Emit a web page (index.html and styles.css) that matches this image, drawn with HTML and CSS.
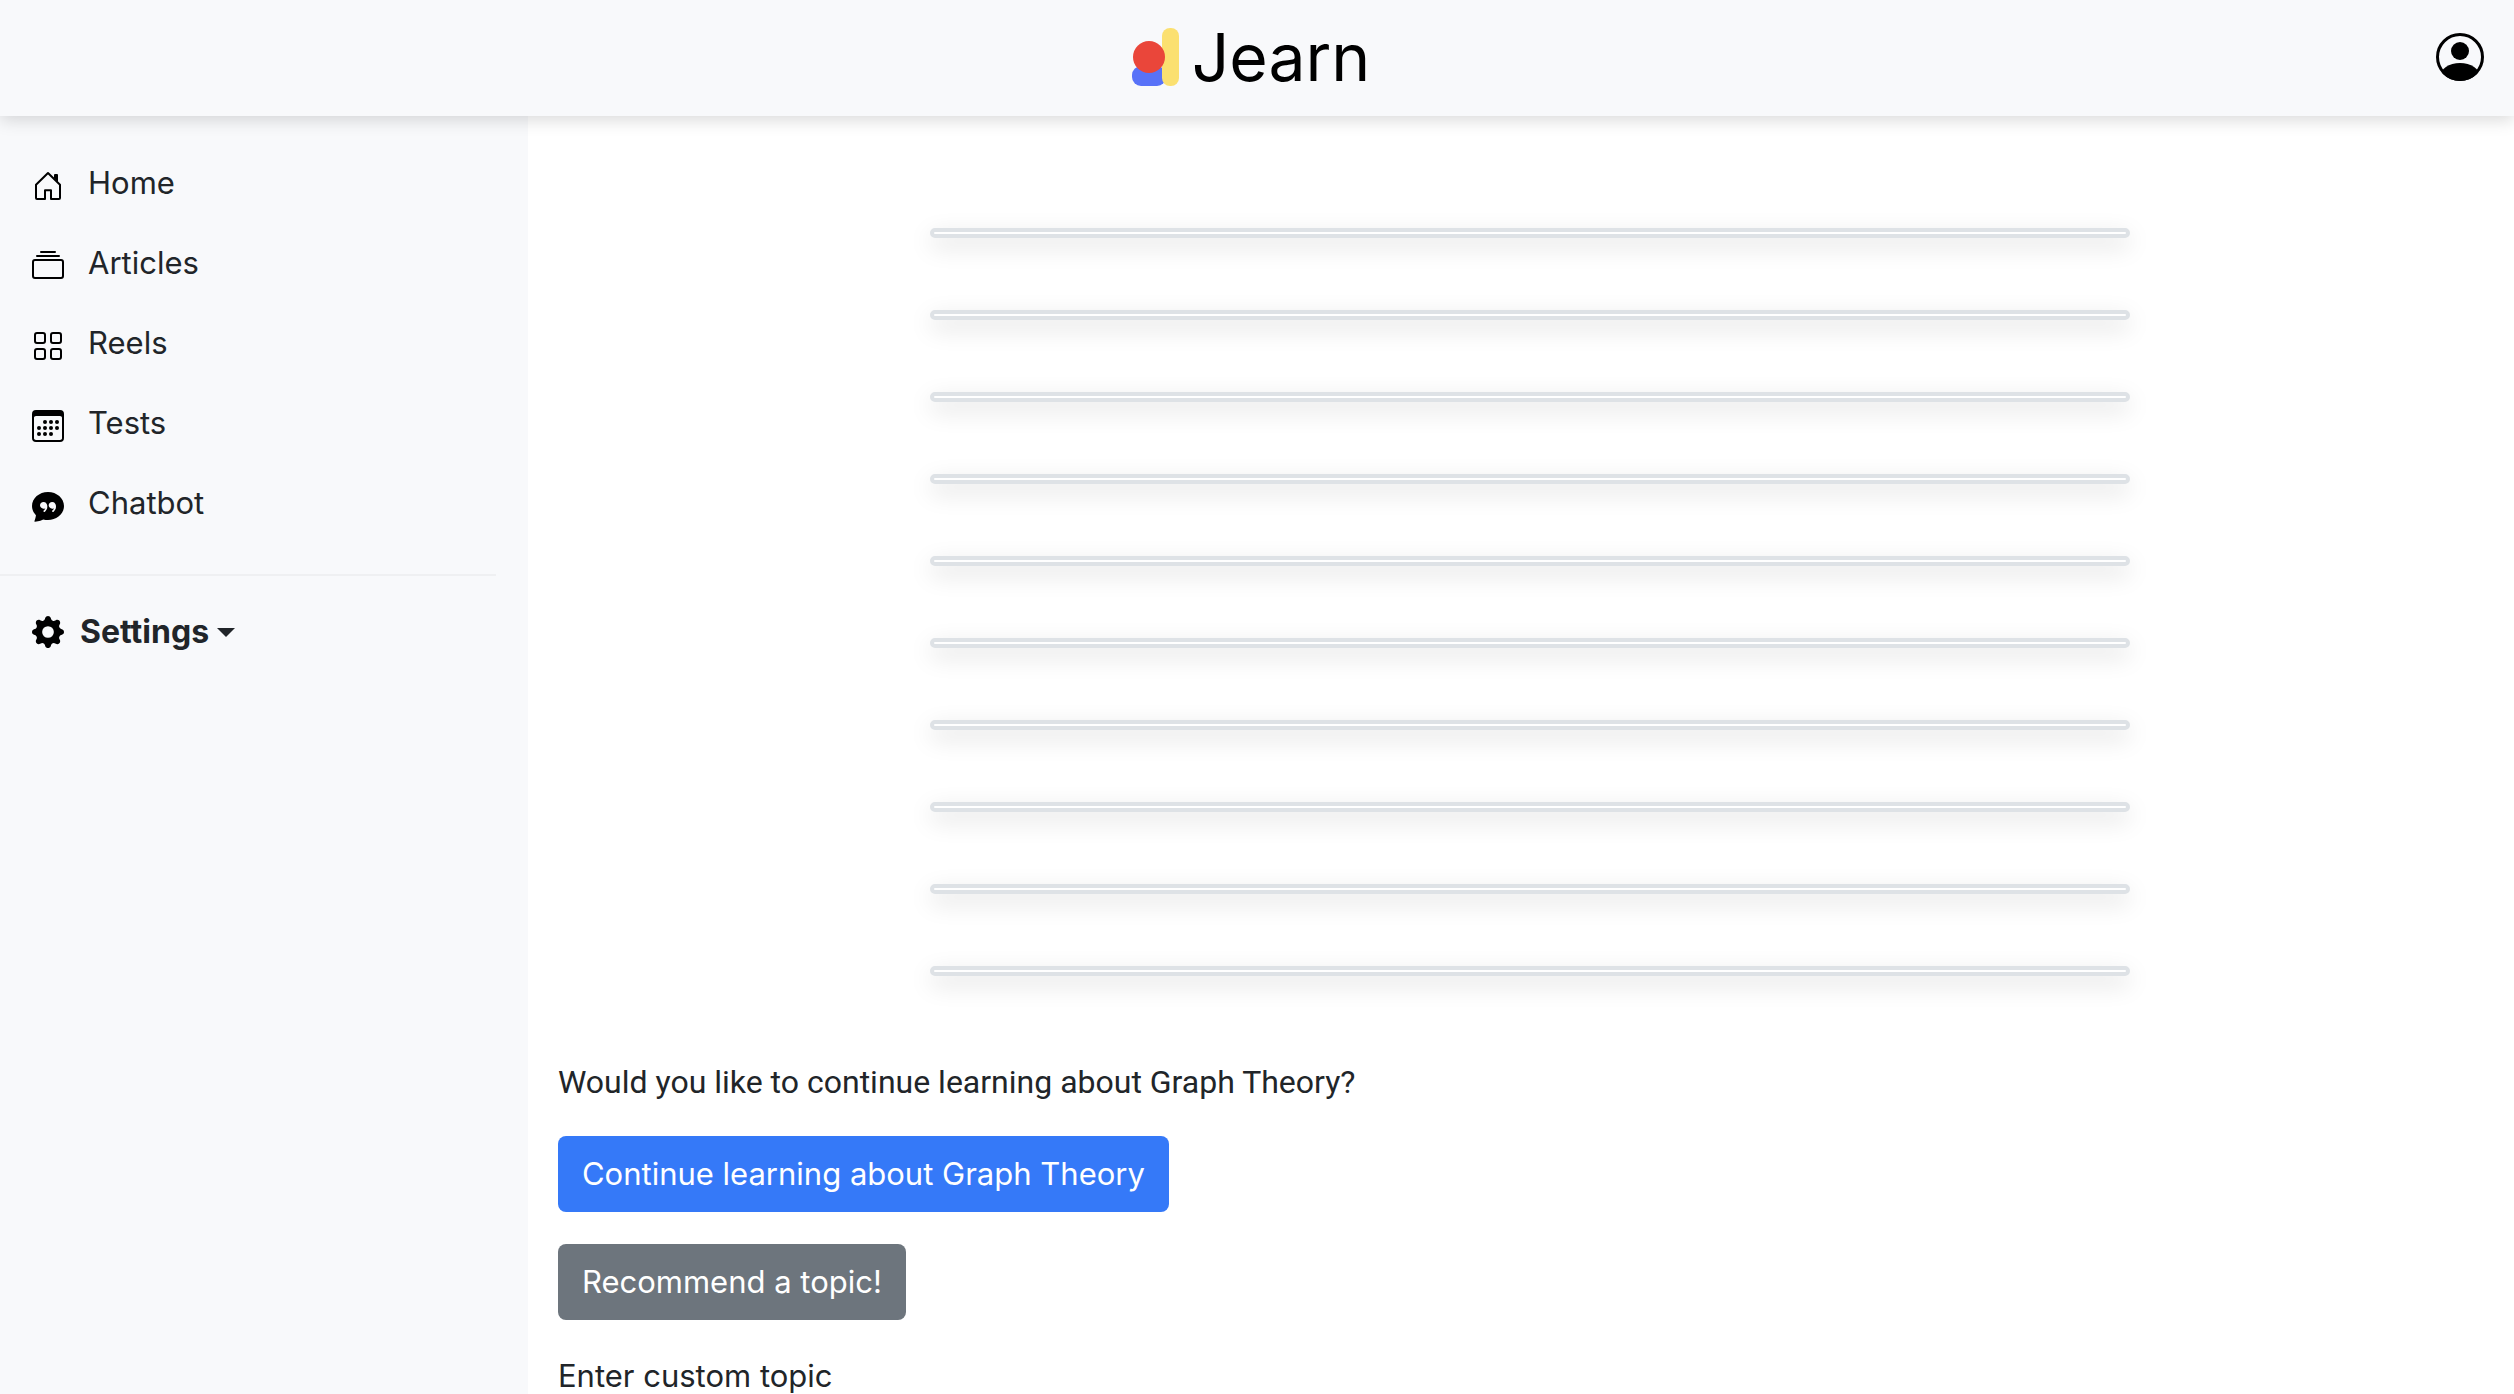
FILE: index.html
```html
<!DOCTYPE html>
<html lang="en">
<head>
<meta charset="utf-8">
<title>Jearn</title>
<link rel="stylesheet" href="styles.css">
</head>
<body>
<header class="topbar">
  <a class="brand" href="#">
    <svg class="brand-mark" viewBox="0 0 48 58" aria-hidden="true">
      <rect x="0" y="38" width="34" height="20" rx="9" fill="#5872f8"/>
      <rect x="30" y="0" width="17" height="58" rx="8" fill="#fbe070"/>
      <circle cx="17" cy="29" r="16" fill="#ea463a"/>
    </svg>
    <span class="brand-name">Jearn</span>
  </a>
  <button class="profile" type="button" aria-label="Profile">
    <svg viewBox="0 0 48 48" width="48" height="48">
      <clipPath id="face"><circle cx="24" cy="24" r="24"/></clipPath>
      <circle cx="24" cy="24" r="22.5" fill="none" stroke="#000" stroke-width="3"/>
      <circle cx="24" cy="18" r="9"/>
      <ellipse cx="24" cy="44" rx="20" ry="14" clip-path="url(#face)"/>
    </svg>
  </button>
</header>
<div class="layout">
  <aside class="sidebar">
    <nav class="menu">
      <a class="menu-item" href="#"><svg class="icon" viewBox="0 0 16 16"><path d="M2 7.4 8 1.5l6 5.900V14a.5.5 0 0 1-.5.5h-4v-4.400h-3v4.400h-4A.5.5 0 0 1 2 14z" fill="none" stroke="#000" stroke-linejoin="round"/><path d="M11 2.500a.5.5 0 0 1 .5-.5h1a.5.5 0 0 1 .5.5V6l-2-2z"/></svg><span>Home</span></a>
      <a class="menu-item" href="#"><svg class="icon" viewBox="0 0 16 16"><path d="M2.500 3.500a.5.5 0 0 1 0-1h11a.5.5 0 0 1 0 1h-11zm2-2a.5.5 0 0 1 0-1h7a.5.5 0 0 1 0 1h-7zM0 13a1.500 1.500 0 0 0 1.500 1.500h13A1.500 1.500 0 0 0 16 13V6a1.500 1.500 0 0 0-1.500-1.500h-13A1.500 1.500 0 0 0 0 6v7zm1.500.5A.5.5 0 0 1 1 13V6a.5.5 0 0 1 .5-.5h13a.5.5 0 0 1 .5.5v7a.5.5 0 0 1-.5.5h-13z"/></svg><span>Articles</span></a>
      <a class="menu-item" href="#"><svg class="icon icon-outline" viewBox="0 0 16 16"><rect x="1.500" y="1.500" width="5" height="5" rx="1"/><rect x="9.500" y="1.500" width="5" height="5" rx="1"/><rect x="1.500" y="9.500" width="5" height="5" rx="1"/><rect x="9.500" y="9.500" width="5" height="5" rx="1"/></svg><span>Reels</span></a>
      <a class="menu-item" href="#"><svg class="icon" viewBox="0 0 16 16"><path d="M14 0H2a2 2 0 0 0-2 2v12a2 2 0 0 0 2 2h12a2 2 0 0 0 2-2V2a2 2 0 0 0-2-2zM1 3.857C1 3.384 1.448 3 2 3h12c.552 0 1 .384 1 .857v10.286c0 .473-.448.857-1 .857H2c-.552 0-1-.384-1-.857V3.857z"/><circle cx="6.500" cy="6" r="1"/><circle cx="9.500" cy="6" r="1"/><circle cx="12.500" cy="6" r="1"/><circle cx="3.500" cy="9" r="1"/><circle cx="6.500" cy="9" r="1"/><circle cx="9.500" cy="9" r="1"/><circle cx="12.500" cy="9" r="1"/><circle cx="3.500" cy="12" r="1"/><circle cx="6.500" cy="12" r="1"/><circle cx="9.500" cy="12" r="1"/></svg><span>Tests</span></a>
      <a class="menu-item" href="#"><svg class="icon" viewBox="0 0 16 16"><path d="M16 8c0 3.866-3.582 7-8 7a9.060 9.060 0 0 1-2.347-.306c-.584.296-1.925.864-4.181 1.234-.2.032-.352-.176-.273-.362.354-.836.674-1.950.77-2.966C.744 11.370 0 9.760 0 8c0-3.866 3.582-7 8-7s8 3.134 8 7zM7.194 6.766a1.688 1.688 0 0 0-.227-.272 1.467 1.467 0 0 0-.469-.324l-.008-.004A1.785 1.785 0 0 0 5.734 6C4.776 6 4 6.746 4 7.667c0 .92.776 1.666 1.734 1.666.343 0 .662-.095.931-.26-.137.389-.39.804-.81 1.220a.405.405 0 0 0 .011.59c.173.16.447.155.614-.01 1.334-1.329 1.370-2.758.941-3.706a2.461 2.461 0 0 0-.227-.4zM11 9.073c-.136.389-.39.804-.81 1.220a.405.405 0 0 0 .012.59c.172.16.446.155.613-.01 1.334-1.329 1.370-2.758.942-3.706a2.466 2.466 0 0 0-.228-.4 1.686 1.686 0 0 0-.227-.273 1.466 1.466 0 0 0-.469-.324l-.008-.004A1.785 1.785 0 0 0 10.070 6c-.957 0-1.734.746-1.734 1.667 0 .92.777 1.666 1.734 1.666.343 0 .662-.095.931-.26z"/></svg><span>Chatbot</span></a>
    </nav>
    <hr class="divider">
    <button class="settings" type="button">
      <svg class="icon" viewBox="0 0 16 16"><path d="M9.405 1.050c-.413-1.400-2.397-1.400-2.810 0l-.1.340a1.464 1.464 0 0 1-2.105.872l-.31-.17c-1.283-.698-2.686.705-1.987 1.987l.169.311c.446.82.023 1.841-.872 2.105l-.34.1c-1.400.413-1.400 2.397 0 2.810l.34.1a1.464 1.464 0 0 1 .872 2.105l-.17.31c-.698 1.283.705 2.686 1.987 1.987l.311-.169a1.464 1.464 0 0 1 2.105.872l.1.34c.413 1.400 2.397 1.400 2.810 0l.1-.34a1.464 1.464 0 0 1 2.105-.872l.31.17c1.283.698 2.686-.705 1.987-1.987l-.169-.311a1.464 1.464 0 0 1 .872-2.105l.34-.1c1.400-.413 1.400-2.397 0-2.810l-.34-.1a1.464 1.464 0 0 1-.872-2.105l.17-.31c.698-1.283-.705-2.686-1.987-1.987l-.311.169a1.464 1.464 0 0 1-2.105-.872l-.1-.34zM8 10.930a2.929 2.929 0 1 1 0-5.860 2.929 2.929 0 0 1 0 5.858z"/></svg>
      <span class="settings-label">Settings</span>
      <span class="caret"></span>
    </button>
  </aside>
  <main class="content">
    <div class="cards">
      <div class="card"></div>
      <div class="card"></div>
      <div class="card"></div>
      <div class="card"></div>
      <div class="card"></div>
      <div class="card"></div>
      <div class="card"></div>
      <div class="card"></div>
      <div class="card"></div>
      <div class="card"></div>
    </div>
    <p class="prompt">Would you like to continue learning about Graph Theory?</p>
    <button class="btn btn-primary" type="button">Continue learning about Graph Theory</button>
    <button class="btn btn-secondary" type="button">Recommend a topic!</button>
    <label class="field-label" for="topic">Enter custom topic</label>
    <input class="field" id="topic" type="text">
  </main>
</div>
</body>
</html>
```
FILE: styles.css
```css
* { box-sizing: border-box; }

body {
  margin: 0;
  height: 100vh;
  display: flex;
  flex-direction: column;
  overflow: hidden;
  background: #fff;
  color: #212529;
  font-family: Inter, "Liberation Sans", sans-serif;
  font-size: 31px;
  line-height: 48px;
}

button {
  font: inherit;
  color: inherit;
  border: 0;
  background: none;
  padding: 0;
  cursor: pointer;
}

.topbar {
  flex: none;
  position: relative;
  display: grid;
  grid-template-columns: 1fr auto 1fr;
  align-items: center;
  height: 116px;
  padding: 0 30px 2px;
  background: #f8f9fb;
  box-shadow: 0 4px 16px rgba(0, 0, 0, .15);
}

.brand {
  grid-column: 2;
  display: flex;
  align-items: center;
  gap: 12px;
  padding-right: 12px;
  color: #000;
  text-decoration: none;
}

.brand-mark { width: 48px; height: 58px; }
.brand-name { font-size: 66px; line-height: 72px; }

.profile {
  justify-self: end;
  height: 48px;
}
.profile svg { display: block; }

.layout {
  flex: 1;
  min-height: 0;
  display: flex;
}

.sidebar {
  flex: none;
  width: 21%;
  background: #f8f9fb;
  padding: 28px 32px 0 0;
}

.menu { display: flex; flex-direction: column; }

.menu-item {
  display: flex;
  align-items: center;
  gap: 24px;
  height: 80px;
  padding: 0 32px 2px;
  color: inherit;
  text-decoration: none;
}

.icon { flex: none; width: 32px; height: 32px; fill: #000; }
.icon-outline { fill: none; stroke: #000; }
.menu-item .icon { margin-top: 6px; }

.divider {
  margin: 30px 0 32px;
  border: 0;
  height: 2px;
  background: #eff0f2;
}

.settings {
  display: flex;
  align-items: center;
  padding: 0 32px;
  font-size: 32px;
  font-weight: 700;
}
.settings-label { margin: 0 8px 0 16px; }
.caret {
  border: 9px solid transparent;
  border-top-color: #212529;
  border-bottom: 0;
}

.content {
  flex: 1;
  min-width: 0;
  display: flex;
  flex-direction: column;
  align-items: flex-start;
  overflow: hidden;
  padding: 112px 12px 0 30px;
}
.content > * { flex: none; }

.cards {
  align-self: center;
  width: 100%;
  max-width: 1200px;
  display: grid;
  gap: 72px;
}

.card {
  height: 10px;
  border: 4px solid #dee2e6;
  border-radius: 5px;
  background: #fff;
  box-shadow: 0 8px 24px rgba(0, 0, 0, .15);
}

.prompt {
  margin: 82px 0 30px;
  font-family: Roboto, Inter, sans-serif;
  font-size: 32px;
}

.btn {
  height: 76px;
  margin-bottom: 32px;
  padding: 0 24px;
  border-radius: 8px;
  color: #fff;
}
.btn-primary { background: #3579f8; }
.btn-secondary { background: #6d757d; }

.field {
  width: 100%;
  height: 76px;
  border: 2px solid #dee2e6;
  border-radius: 12px;
  font: inherit;
}
```
